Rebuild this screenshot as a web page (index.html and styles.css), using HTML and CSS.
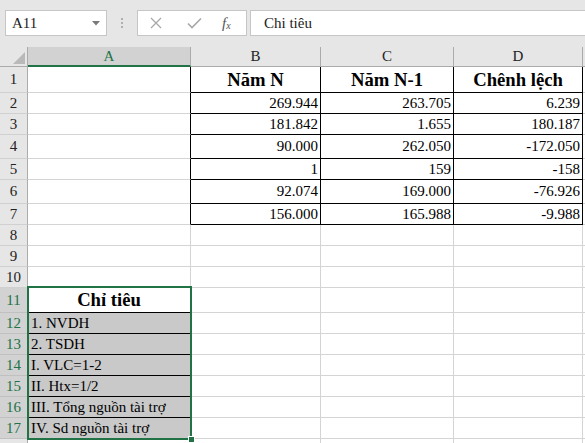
FILE: index.html
```html
<!DOCTYPE html>
<html lang="vi">
<head>
<meta charset="utf-8">
<title>Sheet</title>
<link rel="stylesheet" href="styles.css">
</head>
<body>
<div class="app">
  <div class="fbar">
    <div class="namebox">
      <span class="nb-text">A11</span>
      <svg class="dd" width="8" height="5" viewBox="0 0 8 5"><polygon points="0,0 8,0 4,4.5" fill="#7a7a7a"/></svg>
    </div>
    <div class="grip"><i></i><i></i><i></i></div>
    <div class="btns">
      <svg class="ico-x" width="12" height="12" viewBox="0 0 12 12"><path d="M1 1 L11 11 M11 1 L1 11" stroke="#a8a8a8" stroke-width="1.3" fill="none"/></svg>
      <svg class="ico-ok" width="15" height="12" viewBox="0 0 15 12"><path d="M1 6.5 L5 10.5 L14 1.5" stroke="#a8a8a8" stroke-width="1.6" fill="none"/></svg>
      <span class="fx">f<span class="fx-x">x</span></span>
    </div>
    <div class="finput">Chi tiêu</div>
  </div>

  <div class="sheet">
    <div class="grid">
      <!-- header row -->
      <div class="corner"><svg width="28" height="20" viewBox="0 0 28 20"><polygon points="13,17 25,17 25,5" fill="#b9b9b9"/></svg></div>
      <div class="ch ch-sel">A</div>
      <div class="ch">B</div>
      <div class="ch">C</div>
      <div class="ch">D</div>
      <div class="ch ch-last"></div>

      <!-- row 1 -->
      <div class="rh">1</div>
      <div class="c tl"></div>
      <div class="c t hd">Năm N</div>
      <div class="c t hd">Năm N-1</div>
      <div class="c t hd">Chênh lệch</div>
      <div class="c"></div>

      <!-- row 2 -->
      <div class="rh">2</div>
      <div class="c tl"></div>
      <div class="c t num">269.944</div>
      <div class="c t num">263.705</div>
      <div class="c t num">6.239</div>
      <div class="c"></div>

      <!-- row 3 -->
      <div class="rh">3</div>
      <div class="c tl"></div>
      <div class="c t num">181.842</div>
      <div class="c t num">1.655</div>
      <div class="c t num">180.187</div>
      <div class="c"></div>

      <!-- row 4 -->
      <div class="rh">4</div>
      <div class="c tl"></div>
      <div class="c t num">90.000</div>
      <div class="c t num">262.050</div>
      <div class="c t num">-172.050</div>
      <div class="c"></div>

      <!-- row 5 -->
      <div class="rh">5</div>
      <div class="c tl"></div>
      <div class="c t num">1</div>
      <div class="c t num">159</div>
      <div class="c t num">-158</div>
      <div class="c"></div>

      <!-- row 6 -->
      <div class="rh">6</div>
      <div class="c tl"></div>
      <div class="c t num">92.074</div>
      <div class="c t num">169.000</div>
      <div class="c t num">-76.926</div>
      <div class="c"></div>

      <!-- row 7 -->
      <div class="rh">7</div>
      <div class="c tl"></div>
      <div class="c t num">156.000</div>
      <div class="c t num">165.988</div>
      <div class="c t num">-9.988</div>
      <div class="c"></div>

      <!-- row 8 -->
      <div class="rh">8</div>
      <div class="c"></div><div class="c"></div><div class="c"></div><div class="c"></div><div class="c"></div>

      <!-- row 9 -->
      <div class="rh">9</div>
      <div class="c"></div><div class="c"></div><div class="c"></div><div class="c"></div><div class="c"></div>

      <!-- row 10 -->
      <div class="rh">10</div>
      <div class="c"></div><div class="c"></div><div class="c"></div><div class="c"></div><div class="c"></div>

      <!-- row 11 -->
      <div class="rh rh-sel">11</div>
      <div class="c hd lb">Chỉ tiêu</div>
      <div class="c"></div><div class="c"></div><div class="c"></div><div class="c"></div>

      <!-- row 12 -->
      <div class="rh rh-sel">12</div>
      <div class="c g lb">1. NVDH</div>
      <div class="c"></div><div class="c"></div><div class="c"></div><div class="c"></div>

      <!-- row 13 -->
      <div class="rh rh-sel">13</div>
      <div class="c g lb">2. TSDH</div>
      <div class="c"></div><div class="c"></div><div class="c"></div><div class="c"></div>

      <!-- row 14 -->
      <div class="rh rh-sel">14</div>
      <div class="c g lb">I. VLC=1-2</div>
      <div class="c"></div><div class="c"></div><div class="c"></div><div class="c"></div>

      <!-- row 15 -->
      <div class="rh rh-sel">15</div>
      <div class="c g lb">II. Htx=1/2</div>
      <div class="c"></div><div class="c"></div><div class="c"></div><div class="c"></div>

      <!-- row 16 -->
      <div class="rh rh-sel">16</div>
      <div class="c g lb">III. Tổng nguồn tài trợ</div>
      <div class="c"></div><div class="c"></div><div class="c"></div><div class="c"></div>

      <!-- row 17 -->
      <div class="rh rh-sel">17</div>
      <div class="c g">IV. Sd nguồn tài trợ</div>
      <div class="c"></div><div class="c"></div><div class="c"></div><div class="c"></div>

      <!-- row 18 (only its top edge is visible) -->
      <div class="rh"></div>
      <div class="c"></div><div class="c"></div><div class="c"></div><div class="c"></div><div class="c"></div>
    </div>
    <div class="sel"><div class="handle"></div></div>
  </div>
</div>
</body>
</html>
```

FILE: styles.css
```css
html, body {
  margin: 0;
  padding: 0;
}
body {
  width: 585px;
  height: 443px;
  overflow: hidden;
  background: #ffffff;
  font-family: "Liberation Serif", "Times New Roman", serif;
  color: #000;
}
.app {
  width: 585px;
  height: 443px;
  display: flex;
  flex-direction: column;
  overflow: hidden;
}

/* formula bar */
.fbar {
  height: 47px;
  flex: none;
  background: #e6e6e6;
  box-sizing: border-box;
  padding: 10px 0 0 5px;
  display: flex;
  align-items: flex-start;
}
.namebox {
  width: 102px;
  height: 26px;
  box-sizing: border-box;
  background: #fff;
  border: 1px solid #c6c6c6;
  display: flex;
  align-items: center;
  justify-content: space-between;
  padding: 0 6px 0 6px;
  font-size: 15px;
  color: #222;
}
.nb-text { line-height: 24px; }
.dd { display: block; margin-top: 1px; }
.grip {
  width: 30px;
  height: 26px;
  display: flex;
  flex-direction: column;
  align-items: center;
  justify-content: center;
  gap: 2px;
}
.grip i {
  display: block;
  width: 2px;
  height: 2px;
  background: #b0b0b0;
}
.btns {
  width: 110px;
  height: 26px;
  box-sizing: border-box;
  background: #fff;
  border: 1px solid #c6c6c6;
  display: flex;
  align-items: center;
  padding-left: 12px;
}
.ico-x { display: block; margin-right: 25px; }
.ico-ok { display: block; margin-right: 20px; }
.fx {
  font-style: italic;
  font-size: 15px;
  color: #555;
  font-family: "Liberation Serif", serif;
  line-height: 1;
}
.fx-x {
  font-size: 10px;
  position: relative;
  top: 1px;
}
.finput {
  flex: 1;
  margin-left: 3px;
  height: 26px;
  box-sizing: border-box;
  background: #fff;
  border: 1px solid #c6c6c6;
  border-right: none;
  padding-left: 13px;
  font-size: 15px;
  line-height: 24px;
  color: #222;
}

/* sheet */
.sheet {
  position: relative;
  flex: 1;
  overflow: hidden;
}
.grid {
  display: grid;
  grid-template-columns: 28px 163px 130px 133px 129px 1fr;
  grid-template-rows: 20px 26px 21px 21px 24px 21px 24px 21px 21px 21px 21px 25px 21px 21px 21px 21px 21px 21px 21px;
}
.grid > div {
  box-sizing: border-box;
  min-width: 0;
  overflow: hidden;
  white-space: nowrap;
}
.corner {
  background: #e6e6e6;
  border-right: 1px solid #ababab;
  border-bottom: 1px solid #ababab;
}
.corner svg { display: block; }
.ch {
  background: #e6e6e6;
  border-right: 1px solid #ababab;
  border-bottom: 1px solid #ababab;
  display: flex;
  align-items: center;
  justify-content: center;
  font-size: 15px;
  color: #222;
}
.ch-sel {
  background: #d2d2d2;
  color: #217346;
  border-bottom: 2px solid #217346;
}
.ch-last { border-right: none; }
.rh {
  background: #e6e6e6;
  border-right: 1px solid #ababab;
  border-bottom: 1px solid #d0d0d0;
  display: flex;
  align-items: center;
  justify-content: center;
  font-size: 15px;
  color: #222;
}
.rh-sel {
  background: #d2d2d2;
  color: #217346;
  border-bottom-color: #c0c0c0;
}
.c {
  border-right: 1px solid #d4d4d4;
  border-bottom: 1px solid #d4d4d4;
  display: flex;
  align-items: center;
  font-size: 15px;
  padding: 0 3px;
}
.tl { border-right-color: #000; }
.t {
  border-right-color: #000;
  border-bottom-color: #000;
}
.hd {
  justify-content: center;
  font-weight: bold;
  font-size: 18.67px;
}
.num { justify-content: flex-end; padding-right: 2px; }
.g {
  background: #c9c9c9;
  padding-left: 3px;
}
.lb { border-bottom-color: #000; }

/* selection overlay */
.sel {
  position: absolute;
  left: 27px;
  top: 239px;
  width: 165px;
  height: 154px;
  box-sizing: border-box;
  border: 2px solid #217346;
}
.handle {
  position: absolute;
  right: -5px;
  bottom: -5px;
  width: 7px;
  height: 7px;
  box-sizing: border-box;
  background: #217346;
  border: 1px solid #fff;
}
```
